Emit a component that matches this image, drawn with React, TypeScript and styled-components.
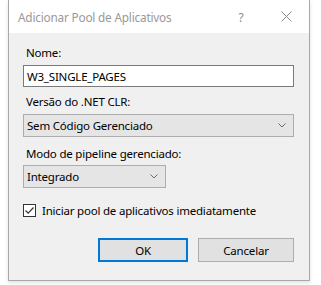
import React from "react";
import styled, { createGlobalStyle } from "styled-components";

const GlobalStyle = createGlobalStyle`
  html, body {
    margin: 0;
    padding: 0;
    background: #ffffff;
  }
  body {
    font-family: "Noto Sans", "Open Sans", Arial, sans-serif;
    font-size: 11.5px;
    letter-spacing: -0.2px;
    color: #000;
  }
`;

const Page = styled.div`
  width: 321px;
  height: 285px;
  padding-left: 8px;
  box-sizing: border-box;
  overflow: hidden;
`;

const Window = styled.div`
  width: 302px;
  height: 281px;
  box-sizing: border-box;
  border: 1px solid #a8a8a8;
  border-top: none;
  display: flex;
  flex-direction: column;
  box-shadow: 0 2px 4px rgba(0, 0, 0, 0.12);
`;

const TitleBar = styled.div`
  height: 33px;
  background: #ffffff;
  display: flex;
  align-items: center;
  padding-left: 9px;
  color: #999999;
  font-size: 11.8px;
`;

const TitleText = styled.span`
  flex: 1;
`;

const TitleButton = styled.span<{ $w: number }>`
  width: ${(p) => p.$w}px;
  display: flex;
  justify-content: center;
  color: #8a8a8a;
`;

const Body = styled.div`
  flex: 1;
  background: #f0f0f0;
  padding: 12px 15px 0 14px;
  display: flex;
  flex-direction: column;
`;

const Label = styled.div<{ $mt?: number; $mb?: number }>`
  line-height: 16px;
  height: 16px;
  padding-left: 3px;
  margin-top: ${(p) => p.$mt ?? 0}px;
  margin-bottom: ${(p) => p.$mb ?? 4}px;
`;

const TextInput = styled.div`
  height: 22px;
  box-sizing: border-box;
  background: #ffffff;
  border: 1px solid #7a7a7a;
  padding-left: 3px;
  display: flex;
  align-items: center;
`;

const Select = styled.div<{ $w?: number }>`
  height: 23px;
  width: ${(p) => (p.$w ? `${p.$w}px` : "auto")};
  box-sizing: border-box;
  background: #e5e5e5;
  border: 1px solid #adadad;
  padding: 0 7px 0 3px;
  display: flex;
  align-items: center;
  justify-content: space-between;
`;

const CheckRow = styled.div`
  height: 16px;
  display: flex;
  align-items: center;
  gap: 6px;
  margin-top: 14px;
`;

const Box = styled.span`
  width: 13px;
  height: 13px;
  box-sizing: border-box;
  border: 1px solid #333333;
  background: #ffffff;
  display: flex;
  align-items: center;
  justify-content: center;
`;

const Buttons = styled.div`
  display: flex;
  justify-content: flex-end;
  gap: 10px;
  margin-top: 20px;
`;

const Button = styled.div<{ $primary?: boolean; $w: number }>`
  width: ${(p) => p.$w}px;
  height: 24px;
  box-sizing: border-box;
  background: #e1e1e1;
  border: ${(p) => (p.$primary ? "2px solid #0078d7" : "1px solid #adadad")};
  display: flex;
  align-items: center;
  justify-content: center;
`;

const Chevron = () => (
  <svg width="8" height="5" viewBox="0 0 8 5">
    <path d="M0.5 0.5 L4 4 L7.5 0.5" fill="none" stroke="#6b6b6b" strokeWidth="1" />
  </svg>
);

export default function App() {
  return (
    <Page>
      <GlobalStyle />
      <Window>
        <TitleBar>
          <TitleText>Adicionar Pool de Aplicativos</TitleText>
          <TitleButton $w={44}>?</TitleButton>
          <TitleButton $w={46}>
            <svg width="11" height="11" viewBox="0 0 11 11">
              <path d="M0.5 0.5 L10.5 10.5 M10.5 0.5 L0.5 10.5" stroke="#8a8a8a" strokeWidth="1" />
            </svg>
          </TitleButton>
        </TitleBar>
        <Body>
          <Label>Nome:</Label>
          <TextInput>W3_SINGLE_PAGES</TextInput>
          <Label $mt={7}>Versão do .NET CLR:</Label>
          <Select>
            <span>Sem Código Gerenciado</span>
            <Chevron />
          </Select>
          <Label $mt={9} $mb={3}>Modo de pipeline gerenciado:</Label>
          <Select $w={143}>
            <span>Integrado</span>
            <Chevron />
          </Select>
          <CheckRow>
            <Box>
              <svg width="11" height="11" viewBox="0 0 11 11">
                <path d="M1.5 5.5 L4.2 8.2 L9.5 2.5" fill="none" stroke="#333" strokeWidth="1.2" />
              </svg>
            </Box>
            <span>Iniciar pool de aplicativos imediatamente</span>
          </CheckRow>
          <Buttons>
            <Button $primary $w={90}>OK</Button>
            <Button $w={96}>Cancelar</Button>
          </Buttons>
        </Body>
      </Window>
    </Page>
  );
}
